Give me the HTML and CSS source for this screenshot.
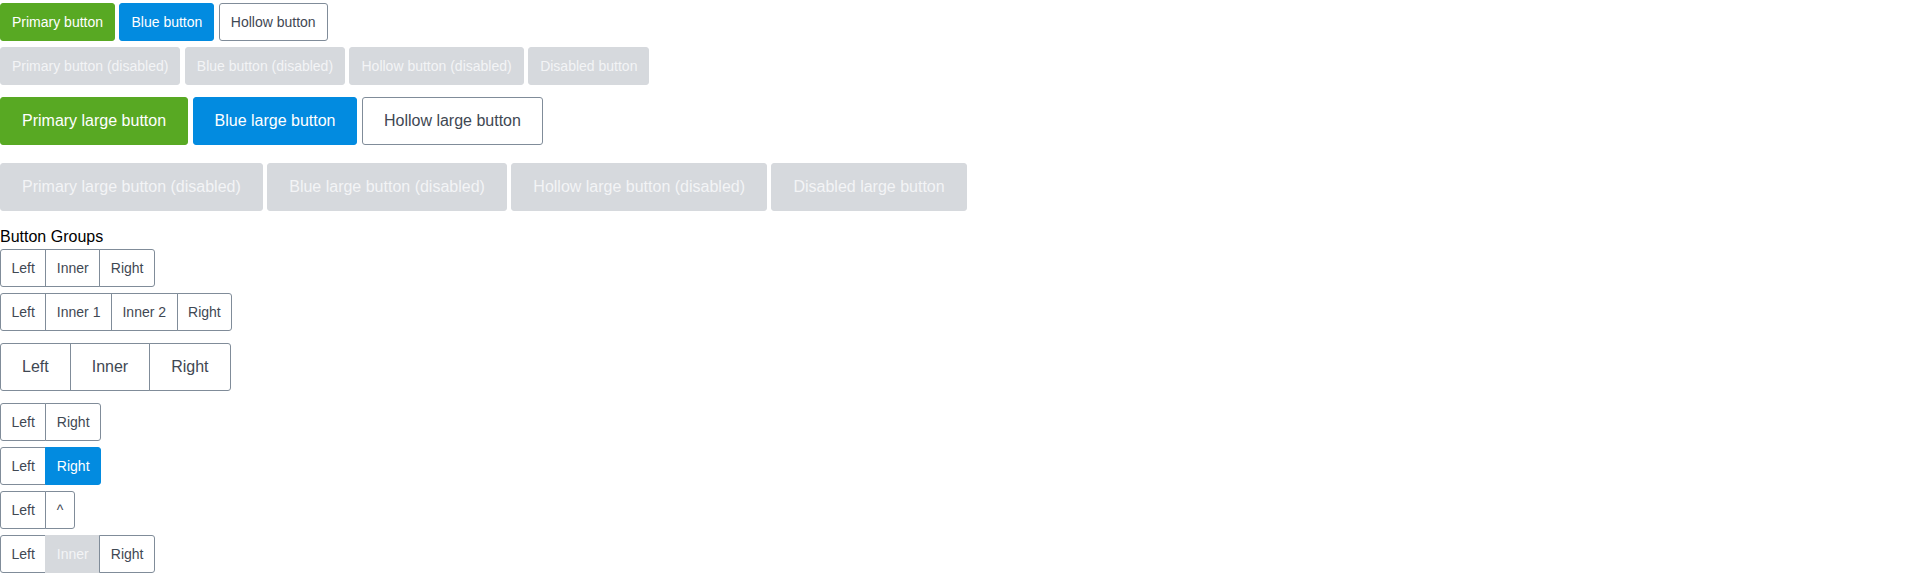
FILE: index.html
```html
<!DOCTYPE html>
<html>
<head>
<meta charset="utf-8">
<link rel="stylesheet" href="styles.css">
</head>
<body>
<div class="row">
  <button class="btn primary">Primary button</button>
  <button class="btn blue">Blue button</button>
  <button class="btn hollow">Hollow button</button>
</div>
<div class="row">
  <button class="btn disabled" disabled>Primary button (disabled)</button>
  <button class="btn disabled" disabled>Blue button (disabled)</button>
  <button class="btn disabled" disabled>Hollow button (disabled)</button>
  <button class="btn disabled" disabled>Disabled button</button>
</div>
<div class="row">
  <button class="btn large primary">Primary large button</button>
  <button class="btn large blue">Blue large button</button>
  <button class="btn large hollow">Hollow large button</button>
</div>
<div class="row">
  <button class="btn large disabled" disabled>Primary large button (disabled)</button>
  <button class="btn large disabled" disabled>Blue large button (disabled)</button>
  <button class="btn large disabled" disabled>Hollow large button (disabled)</button>
  <button class="btn large disabled" disabled>Disabled large button</button>
</div>
<div class="heading">Button Groups</div>
<div class="group">
  <button class="gbtn">Left</button><button class="gbtn">Inner</button><button class="gbtn">Right</button>
</div>
<div class="group">
  <button class="gbtn">Left</button><button class="gbtn">Inner 1</button><button class="gbtn">Inner 2</button><button class="gbtn">Right</button>
</div>
<div class="group large">
  <button class="gbtn">Left</button><button class="gbtn">Inner</button><button class="gbtn">Right</button>
</div>
<div class="group">
  <button class="gbtn">Left</button><button class="gbtn">Right</button>
</div>
<div class="group">
  <button class="gbtn">Left</button><button class="gbtn selected">Right</button>
</div>
<div class="group">
  <button class="gbtn">Left</button><button class="gbtn">^</button>
</div>
<div class="group">
  <button class="gbtn">Left</button><button class="gbtn gdisabled" disabled>Inner</button><button class="gbtn">Right</button>
</div>
</body>
</html>
```
FILE: styles.css
```css
body {
  margin: 0;
  display: flex;
  flex-direction: column;
  align-items: flex-start;
  font-family: "Liberation Sans", Arial, sans-serif;
  font-size: 16px;
  color: #000;
  background: #fff;
}

.row {
  display: flex;
  column-gap: 4.45px;
}

.btn {
  box-sizing: border-box;
  height: 38px;
  margin: 3px 0;
  padding: 0 11px;
  border: 1px solid transparent;
  border-radius: 3px;
  font-family: "Liberation Sans", Arial, sans-serif;
  font-size: 14px;
  line-height: 1;
  white-space: nowrap;
  cursor: pointer;
}

.btn.large {
  height: 48px;
  margin: 9px 0;
  padding: 0 21px;
  font-size: 16px;
}

.primary {
  background: #58a923;
  border-color: #58a923;
  color: #fff;
}

.blue {
  background: #028be0;
  border-color: #028be0;
  color: #fff;
}

.hollow {
  background: #fff;
  border-color: #808c99;
  color: #3f4853;
}

.disabled {
  background: #d6d9dd;
  border-color: #d6d9dd;
  color: #f3f4f6;
  cursor: default;
}

.heading {
  margin-top: 8px;
  font-size: 16px;
  line-height: 18.4px;
  color: #000;
}

.group {
  display: flex;
  margin: 3px 0;
}

.group.large {
  margin: 9px 0;
}

.gbtn {
  position: relative;
  box-sizing: border-box;
  height: 38px;
  margin: 0 0 0 -1px;
  padding: 0 10.5px;
  border: 1px solid #808c99;
  border-radius: 0;
  background: #fff;
  color: #3f4853;
  font-family: "Liberation Sans", Arial, sans-serif;
  font-size: 14px;
  line-height: 1;
  white-space: nowrap;
  cursor: pointer;
}

.group.large .gbtn {
  height: 48px;
  padding: 0 21px;
  font-size: 16px;
}

.gbtn:first-child {
  margin-left: 0;
  border-radius: 3px 0 0 3px;
}

.gbtn:last-child {
  border-radius: 0 3px 3px 0;
}

.gbtn.selected {
  z-index: 1;
  background: #028be0;
  border-color: #028be0;
  color: #fff;
}

.gbtn.gdisabled {
  background: #d6d9dd;
  border-color: #d6d9dd;
  color: #f3f4f6;
  cursor: default;
}
```
